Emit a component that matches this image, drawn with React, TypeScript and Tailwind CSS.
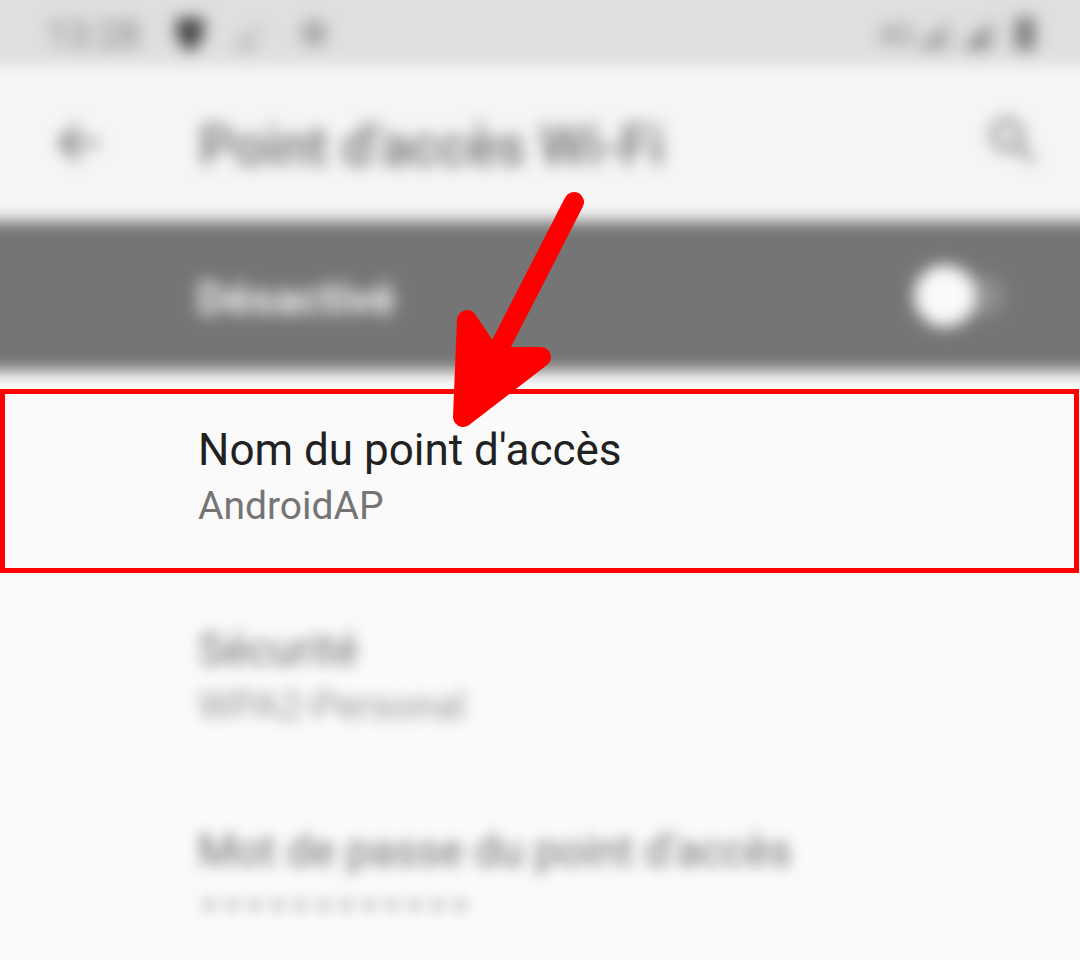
import React, { useState } from 'react';

interface PreferenceProps {
  title: string;
  summary: string;
  highlighted?: boolean;
  mono?: boolean;
}

const Preference = ({ title, summary, highlighted = false, mono = false }: PreferenceProps) => (
  <button
    type="button"
    className={`flex flex-col items-start pr-6 text-left ${
      highlighted
        ? 'mr-px border-[5px] border-[#ff0000] bg-[#fafafa] pt-[27px] pb-9 pl-[193px] text-[#212121]'
        : 'py-7 pl-[198px] text-[#707070]'
    }`}
  >
    <span className="text-[44px] leading-[58px]">{title}</span>
    <span
      className={
        mono
          ? "pt-1 font-['Liberation_Mono',monospace] text-[38px] leading-12 text-[#a6a6a6]"
          : `pt-px text-[39px] leading-[52px] ${highlighted ? 'text-[#757575]' : 'text-[#9a9a9a]'}`
      }
    >
      {summary}
    </span>
  </button>
);

const StatusBar = () => (
  <div className="flex h-[97px] items-center justify-between bg-[#dfdfdf] pt-9 pr-[71px] pl-[78px] text-[#808080]">
    <div className="flex items-center">
      <span className="w-[98px] text-[38px] leading-10">13:28</span>
      <svg className="ml-7 h-10 w-9" viewBox="0 0 36 40" fill="#484848" aria-hidden="true">
        <path d="M4 3h28v12c0 9-5 15-14 22C9 30 4 24 4 15z" />
      </svg>
      <svg className="ml-6 h-10 w-9" viewBox="0 0 36 40" fill="none" stroke="#8f8f8f" strokeWidth="3" aria-hidden="true">
        <path d="M28 12 16 24M9 20v14h16" />
      </svg>
      <svg className="ml-7 h-10 w-9" viewBox="0 0 36 40" fill="none" stroke="#808080" strokeWidth="4" aria-hidden="true">
        <circle cx="18" cy="18" r="7" />
        <path d="M18 5v6M18 25v6M5 18h6M25 18h6M9 9l4 4M23 23l4 4M27 9l-4 4M13 23l-4 4" />
      </svg>
    </div>
    <div className="flex items-center">
      <span className="text-[30px] leading-10">4G</span>
      <svg className="h-10 w-10" viewBox="0 0 40 40" aria-hidden="true">
        <path d="M4 34 35 3v31z" fill="#b8b8b8" />
        <path d="M4 34 23 15v19z" fill="#949494" />
      </svg>
      <svg className="ml-1 h-10 w-10" viewBox="0 0 40 40" aria-hidden="true">
        <path d="M4 34 35 3v31z" fill="#b0b0b0" />
        <path d="M4 34 25 13v21z" fill="#808080" />
      </svg>
      <svg className="ml-[10px] h-10 w-8" viewBox="0 0 32 40" fill="#808080" aria-hidden="true">
        <path d="M11 1h10v3h5v31H6V4h5z" />
      </svg>
    </div>
  </div>
);

const AppBar = () => (
  <header className="flex h-[156px] items-center bg-[#f5f5f5] pr-[71px] pl-[84px] text-[#707070]">
    <button type="button" aria-label="Retour" className="h-14 w-14">
      <svg viewBox="0 0 56 56" fill="none" stroke="currentColor" strokeWidth="5" aria-hidden="true">
        <path d="M47 28H10M27 10 9 28l18 18" />
      </svg>
    </button>
    <h1 className="ml-[91px] flex-1 pt-[6px] text-[55px] leading-16 font-medium">Point d'accès Wi-Fi</h1>
    <button type="button" aria-label="Rechercher" className="h-14 w-14">
      <svg viewBox="0 0 56 56" fill="none" stroke="#8a8a8a" strokeWidth="6" aria-hidden="true">
        <circle cx="22" cy="20" r="14" />
        <path d="m32 30 17 17" />
      </svg>
    </button>
  </header>
);

const HotspotSwitch = () => {
  const [enabled, setEnabled] = useState(false);

  return (
    <label className="flex h-[150px] items-center justify-between bg-[#757575] pr-[108px] pl-[229px]">
      <span className="pt-[6px] text-[45px] leading-14 font-bold text-[#f5f5f5]">Désactivé</span>
      <input
        type="checkbox"
        role="switch"
        checked={enabled}
        onChange={(e) => setEnabled(e.target.checked)}
        className="flex h-10 w-[90px] appearance-none items-center rounded-full bg-[#8f8f8f] before:h-[62px] before:w-[62px] before:shrink-0 before:rounded-full before:bg-[#fafafa] checked:justify-end"
      />
    </label>
  );
};

// Red pointer drawn over the page, its tip ends on the highlighted row
const Pointer = () => (
  <svg
    className="pointer-events-none absolute top-[190px] left-[450px] h-60 w-[140px]"
    viewBox="450 190 140 240"
    fill="#ff0000"
    stroke="#ff0000"
    strokeWidth="20"
    strokeLinecap="round"
    strokeLinejoin="round"
    aria-hidden="true"
  >
    <path d="M574 202 490 366" />
    <path d="m467 320 25 37h49l-78 60z" />
  </svg>
);

export default function App() {
  return (
    <div className="relative flex min-h-screen flex-col overflow-hidden bg-[#fafafa] font-['Roboto',sans-serif]">
      {/* the blurred bars run past the window edges so that their sides stay solid */}
      <div className="-mx-8 -mt-8 pb-[18px] blur-[8px]">
        <StatusBar />
        <AppBar />
        <HotspotSwitch />
      </div>

      <Preference title="Nom du point d'accès" summary="AndroidAP" highlighted />

      <div className="mt-5 flex flex-col gap-[34px] blur-[7px]">
        <Preference title="Sécurité" summary="WPA2-Personal" />
        <Preference title="Mot de passe du point d'accès" summary="••••••••••••" mono />
      </div>

      <Pointer />
    </div>
  );
}
